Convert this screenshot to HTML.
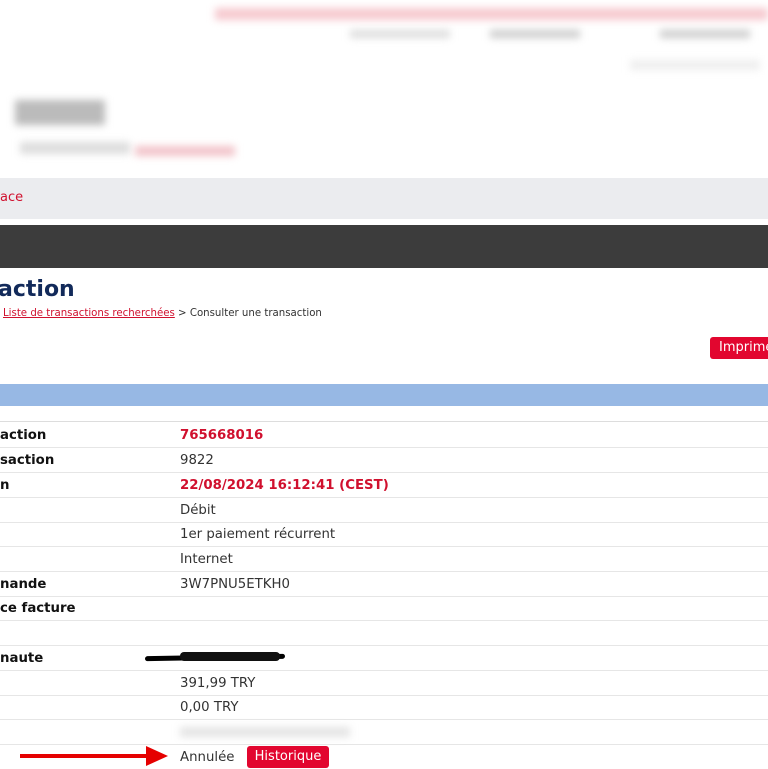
<!DOCTYPE html><html><head><style>
body{margin:0;width:768px;height:768px;overflow:hidden;background:#fff;font-family:"DejaVu Sans",Verdana,sans-serif;position:relative}
.a{position:absolute}
.blur{filter:blur(4px)}
.row{position:absolute;left:0;width:768px;height:24px;border-bottom:1px solid #e6e6e6;font-size:13.3px;color:#333}
.row b{position:absolute;left:0;top:5px;color:#111}
.row span{position:absolute;left:180px;top:5px}
.red{color:#d0102e;font-weight:bold}
</style></head><body>
<div class="a blur" style="left:215px;top:8px;width:553px;height:12px;background:#f6c9cf"></div>
<div class="a blur" style="left:350px;top:30px;width:100px;height:8px;background:#ddd"></div>
<div class="a blur" style="left:490px;top:30px;width:90px;height:8px;background:#ccc"></div>
<div class="a blur" style="left:660px;top:30px;width:90px;height:8px;background:#ccc"></div>
<div class="a blur" style="left:630px;top:60px;width:130px;height:10px;background:#eee"></div>
<div class="a blur" style="left:15px;top:100px;width:90px;height:25px;background:#bbb"></div>
<div class="a blur" style="left:20px;top:142px;width:110px;height:12px;background:#ddd"></div>
<div class="a blur" style="left:135px;top:146px;width:100px;height:10px;background:#f2c3c9"></div>
<div class="a" style="left:0;top:178px;width:768px;height:41px;background:#ebecef"></div>
<div class="a" style="left:0;top:190px;font-size:13px;color:#d0102e">ace</div>
<div class="a" style="left:0;top:225px;width:768px;height:43px;background:#3c3c3c"></div>
<div class="a" style="left:-2px;top:277px;font-size:22px;font-weight:bold;color:#122a5a">action</div>
<div class="a" style="left:3px;top:308px;font-size:10.2px;color:#333"><span style="color:#d0102e;text-decoration:underline">Liste de transactions recherchées</span> &gt; Consulter une transaction</div>
<div class="a" style="left:710px;top:337px;width:70px;height:22px;background:#e2062f;border-radius:3px;color:#fff;font-size:13px;line-height:22px;padding-left:9px">Imprimer</div>
<div class="a" style="left:0;top:384px;width:768px;height:22px;background:#97b8e4"></div>
<div class="a" style="left:0;top:421px;width:768px;height:1px;background:#ddd"></div>
<div class="row" style="top:423px"><b>action</b><span class="red">765668016</span></div>
<div class="row" style="top:448px"><b>saction</b><span>9822</span></div>
<div class="row" style="top:473px"><b>n</b><span class="red">22/08/2024 16:12:41 (CEST)</span></div>
<div class="row" style="top:498px"><span>Débit</span></div>
<div class="row" style="top:522px"><span>1er paiement récurrent</span></div>
<div class="row" style="top:547px"><span>Internet</span></div>
<div class="row" style="top:572px"><b>nande</b><span>3W7PNU5ETKH0</span></div>
<div class="row" style="top:596px"><b>ce facture</b></div>
<div class="row" style="top:621px"></div>
<div class="row" style="top:646px"><b>naute</b></div>
<div class="a" style="left:145px;top:655px;width:140px;height:5px;background:#000;border-radius:3px;transform:rotate(-1deg)"></div>
<div class="a" style="left:180px;top:652px;width:100px;height:9px;background:#111;border-radius:4px"></div>
<div class="row" style="top:671px"><span>391,99 TRY</span></div>
<div class="row" style="top:695px"><span>0,00 TRY</span></div>
<div class="row" style="top:720px"></div>
<div class="a blur" style="left:180px;top:727px;width:170px;height:10px;background:#e4e4e4"></div>
<div class="row" style="top:745px;border:0"><span>Annulée</span></div>
<div class="a" style="left:247px;top:746px;width:82px;height:22px;background:#e2062f;border-radius:3px;color:#fff;font-size:13px;line-height:22px;text-align:center">Historique</div>
<div class="a" style="left:20px;top:754px;width:130px;height:4px;background:#e50000"></div>
<div class="a" style="left:146px;top:746px;width:0;height:0;border-left:22px solid #e50000;border-top:10px solid transparent;border-bottom:10px solid transparent"></div>
</body></html>
